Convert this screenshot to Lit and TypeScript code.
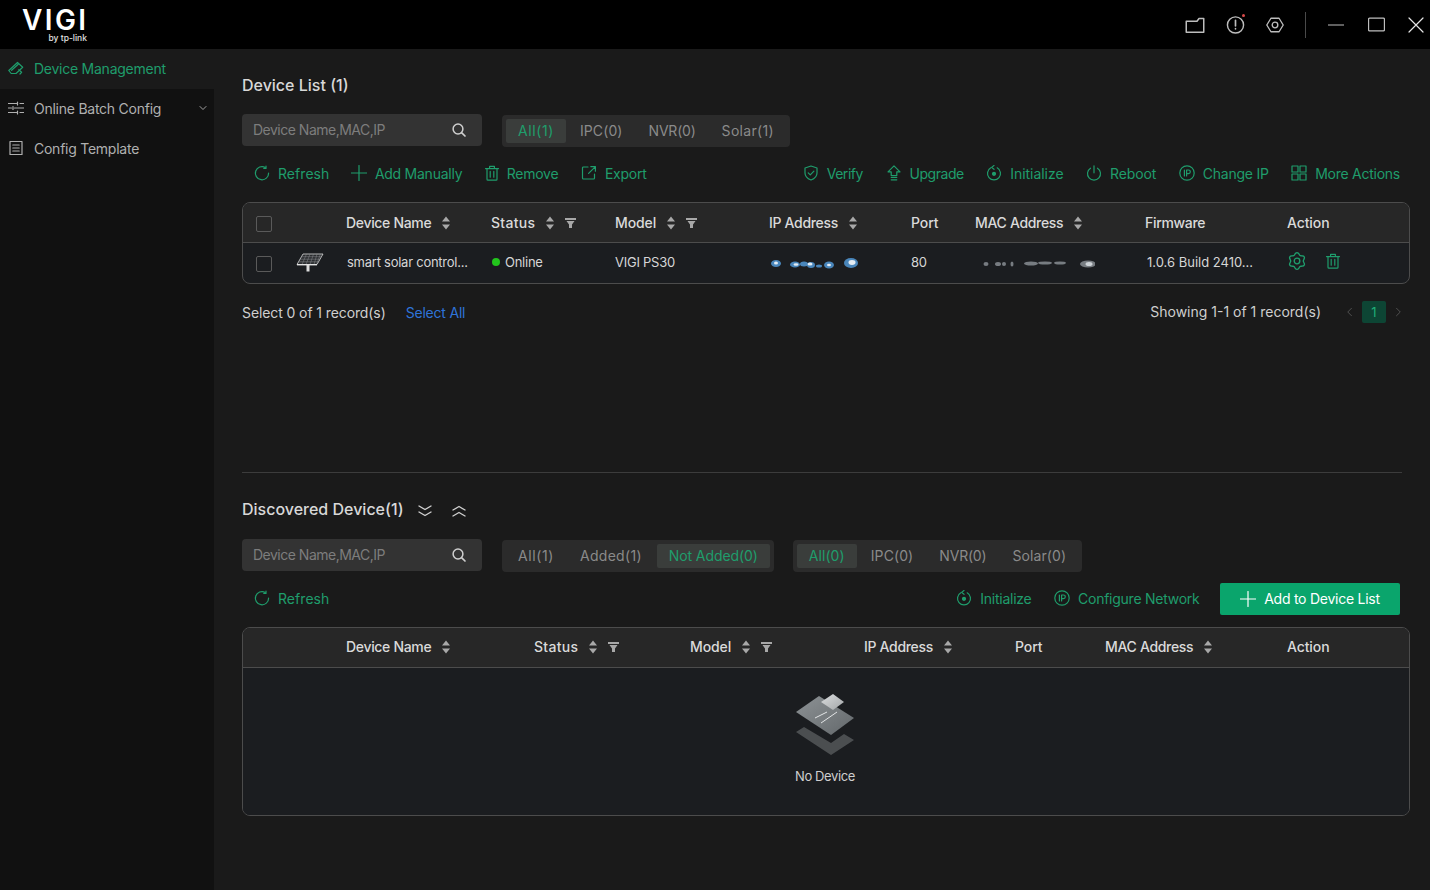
import { LitElement, html, css, svg, nothing } from "lit";
import { customElement } from "lit/decorators.js";

const ic = (inner: unknown, size = 16, cls = "") => html`<svg class="ic ${cls}" width=${size} height=${size} viewBox="0 0 16 16" fill="none" stroke="currentColor" stroke-width="1.2" stroke-linecap="round" stroke-linejoin="round">${inner}</svg>`;

const flower = (() => {
  const pts: string[] = [];
  for (let i = 0; i < 72; i++) {
    const t = (i / 72) * Math.PI * 2;
    const r = 6.5 + 0.9 * Math.cos(6 * t);
    pts.push(`${(8 + r * Math.sin(t)).toFixed(2)} ${(8 - r * Math.cos(t)).toFixed(2)}`);
  }
  return "M" + pts.join("L") + "z";
})();

const I = {
  refresh: svg`<path d="M11.2 2.400A6.600 6.600 0 1 0 14.600 8"/><path d="M11.600 .8v2.400H9.400" transform="translate(.4 .2)"/>`,
  plus: svg`<path d="M8 .5v15M.5 8h15"/>`,
  trash: svg`<path d="M1.500 3.600h13M5.600 3.400V1.400h4.800v2M3 3.800v10.400c0 .6.3.9.9.9h8.200c.6 0 .9-.3.9-.9V3.800M6.200 6.400v5.800M9.800 6.400v5.800"/>`,
  export: svg`<path d="M7 2H2.400C1.900 2 1.500 2.400 1.500 2.900v10.200c0 .5.4.9.9.9h10.200c.5 0 .9-.4.9-.9V9M9.800 1.600h4.600v4.600M14.200 1.800 7.600 8.400"/>`,
  verify: svg`<path d="M8 1 14 3v5c0 3.400-2.600 5.700-6 7-3.400-1.300-6-3.600-6-7V3z"/><path d="m5.200 7.800 2.100 2.100 3.600-3.700"/>`,
  upgrade: svg`<path d="M8 .8 14 6.800H10.800V10.600H5.200V6.800H2zM5.200 12.500h5.600M5.200 14.800h5.600"/>`,
  init: svg`<path d="M4.800 2.800a6.500 6.500 0 1 0 6.400 0"/><path d="M8.400 .5 6 2.400l2.400 1.900" transform="translate(-.4 0)"/><circle cx="8" cy="8.800" r="1.500" fill="currentColor"/>`,
  power: svg`<path d="M8 .8v7M4.500 3.200a6.500 6.500 0 1 0 7 0"/>`,
  ip: svg`<circle cx="8" cy="8" r="7.200"/><path d="M5.400 5v6M7.600 11V5h1.900a1.700 1.700 0 0 1 0 3.600H7.600"/>`,
  grid: svg`<path d="M1 1h6v6H1zM9 1h6v6H9zM1 9h6v6H1zM9 9h6v6H9z"/>`,
  search: svg`<circle cx="7" cy="7" r="4.900" stroke-width="1.500"/><path d="m10.800 10.800 3.200 3.200" stroke-width="1.700"/>`,
  gear: svg`<path d=${flower}/><circle cx="8" cy="8" r="2.500"/>`,
  sliders: svg`<path d="M.5 3.500h8.500M12 3.500h3.500M.5 8h3M6.500 8h9M.5 12.500h8.500M12 12.500h3.500M9.500 2v3M5 6.500v3M9.500 11v3"/>`,
  doc: svg`<path d="M2 1.500h12v13H2zM4.800 5h6.400M4.800 8h6.400M4.800 11h6.400"/>`,
  cam: svg`<path d="M.8 10.500 9.500 2.500l5.200 4.700-6.700 6.300H3.200zM3.600 10.300l6.400-5.800M10.800 9.600l2.800 2.700-1.600 1.700"/>`,
  chev: svg`<path d="m4 6 4 4 4-4"/>`,
  double: svg`<path d="m2 3 6 3.500L14 3M2 9l6 3.500L14 9" stroke-width="1.400"/>`,
  doubleUp: svg`<path d="m2 7 6-3.500L14 7M2 13l6-3.500L14 13" stroke-width="1.400"/>`,
  folder: svg`<path d="M1 5h8.600l1.600-2.200H15v11H1z"/>`,
  info: svg`<circle cx="8" cy="8.400" r="6.800"/><path d="M8 4.500v4.700M8 11.500v.3" stroke-width="1.400"/>`,
  hex: svg`<path d="M4.400 2h7.200L15.300 8l-3.700 6H4.400L.7 8z"/><circle cx="8" cy="8" r="2.500"/>`,
  min: svg`<path d="M.5 8h15"/>`,
  max: svg`<rect x=".5" y="2" width="15" height="12" rx="1"/>`,
  close: svg`<path d="m1 1 14 14M15 1 1 15"/>`,
  left: svg`<path d="m10 3-5 5 5 5"/>`,
  right: svg`<path d="m6 3 5 5-5 5"/>`,
};

const sort = html`<svg class="sort" width="10" height="14" viewBox="0 0 10 14"><path d="M5 0.500 9 5.500H1zM5 13.500 1 8.500h8z" fill="currentColor"/></svg>`;
const filter = html`<svg class="filter" width="11" height="10" viewBox="0 0 11 10"><path d="M0 0h11v2H0zM1.500 3h8L7 6.500v3.500H4V6.500z" fill="currentColor"/></svg>`;

const solar = html`<svg class="panel" width="28" height="22" viewBox="0 0 28 22" fill="none"><path d="M7 2h20l-6 10.500H1z" fill="#2b2d30" stroke="#dcdcdc" stroke-width=".8"/><path d="M10.500 2 6 12.500M14 2 10 12.500M17.500 2 14 12.500M21 2 18 12.500M24.500 2 20.500 12.500M5 4.700h20.500M3.500 7.200h20.500M2.200 9.800h20.300" stroke="#8b8d90" stroke-width=".5"/><path d="M1 12.700h20" stroke="#e2e2e2" stroke-width="1.400"/><path d="M12 13v6.500" stroke="#dcdcdc" stroke-width="3"/></svg>`;

const blurIp = html`<svg class="blur" width="92" height="14" viewBox="0 0 92 14"><defs><filter id="fz" x="-10%" y="-30%" width="120%" height="140%"><feGaussianBlur stdDeviation=".6"/></filter></defs><g filter="url(#fz)">
  <g fill="#4a86bb"><ellipse cx="7" cy="6.500" rx="5" ry="3.500"/><ellipse cx="26" cy="7.500" rx="5" ry="3"/><ellipse cx="35" cy="7" rx="4" ry="2.500"/><ellipse cx="42" cy="8" rx="4" ry="3"/><ellipse cx="50" cy="9" rx="3" ry="1.500"/><ellipse cx="60" cy="8" rx="5" ry="3.500"/><ellipse cx="82" cy="6" rx="7" ry="5"/></g>
  <g fill="#e4ecf3"><ellipse cx="7" cy="6" rx="2" ry="1.500"/><ellipse cx="27" cy="7.500" rx="2.500" ry="1.300"/><ellipse cx="41" cy="7" rx="2.500" ry="1.500"/><ellipse cx="60" cy="8" rx="2" ry="1.300"/><ellipse cx="83" cy="5.500" rx="3.500" ry="2.400"/></g></g></svg>`;
const blurMac = html`<svg class="blur" width="120" height="12" viewBox="0 0 120 12"><defs><filter id="fy" x="-5%" y="-40%" width="110%" height="180%"><feGaussianBlur stdDeviation=".6"/></filter></defs><g filter="url(#fy)"><g fill="#777c81"><ellipse cx="11" cy="6" rx="2.500" ry="2"/><ellipse cx="23" cy="6" rx="3" ry="2"/><ellipse cx="29" cy="6" rx="2" ry="2"/><ellipse cx="37" cy="6" rx="1.500" ry="2.500"/><ellipse cx="56" cy="5.500" rx="7" ry="2"/><ellipse cx="70" cy="5" rx="7" ry="1.600"/><ellipse cx="85" cy="5" rx="6" ry="1.600"/><ellipse cx="113" cy="6" rx="8" ry="3.500"/></g><ellipse cx="114" cy="6" rx="3.500" ry="2" fill="#cdd2d6"/></g></svg>`;

const emptyIcon = html`<svg width="60" height="62" viewBox="35 13 60 62">
  <defs><linearGradient id="pl" x1="0" y1="0" x2="1" y2="1"><stop offset="0" stop-color="#8d9295"/><stop offset="1" stop-color="#63686b"/></linearGradient>
  <linearGradient id="tl" x1="0" y1="0" x2="1" y2="1"><stop offset="0" stop-color="#dcdedf"/><stop offset="1" stop-color="#a2a5a7"/></linearGradient></defs>
  <path d="M35 52 43 47 70 63 83 54 93 60 70 75z" fill="#4b4e50"/>
  <path d="M35 32 58 16 93 38 70 55z" fill="url(#pl)"/>
  <path d="M60 22 72 14 83 22 72 30z" fill="url(#tl)"/>
  <path d="M54 38 66 32M60 43 76 32" stroke="#e3e5e6" stroke-width="1" fill="none"/>
</svg>`;

type Tab = { label: string; on?: boolean; cls?: string };

@customElement("app-root")
export class AppRoot extends LitElement {
  static styles = css`
    :host { display: block; width: 1430px; height: 890px; overflow: hidden; background: #1a1a1a; color: #d4d4d4; font-family: Inter, "Liberation Sans", sans-serif; font-size: 14px; letter-spacing: -0.25px; }
    * { box-sizing: border-box; }
    .ic { flex: none; display: block; }
    .top { height: 49px; background: #000; display: flex; align-items: center; }
    .logo { margin-left: 22px; margin-top: 1px; width: 66px; display: flex; flex-direction: column; align-items: flex-end; color: #fff; }
    .logo b { font-size: 28px; line-height: 25px; font-weight: 600; letter-spacing: 2.4px; width: 66px; }
    .logo span { font-size: 8.500px; line-height: 10px; font-weight: 500; letter-spacing: 0; margin-right: 1px; color: #e0e0e0; }
    .winbar { margin-left: auto; display: flex; align-items: center; color: #bdbdbd; }
    .wb { width: 40px; height: 40px; display: flex; align-items: center; justify-content: center; position: relative; }
    .wb.x { width: 28px; margin-left: 6px; color: #e6e6e6; }
    .dot { position: absolute; width: 3px; height: 3px; border-radius: 50%; background: #d94a4a; top: 9px; right: 10px; }
    .sep { width: 1px; height: 26px; background: #4a4a4a; margin: 0 10px; }
    .body { display: flex; height: 841px; }
    .side { width: 214px; background: #111; flex: none; }
    .nav { height: 40px; display: flex; align-items: center; gap: 10px; padding: 0 0 2px 8px; color: #b0b0b0; position: relative; }
    .nav.on { background: #1a1a1a; color: #1f9d6c; }
    .nav .chev { position: absolute; right: 5px; }
    .main { flex: 1; padding: 24px 20px 0 28px; min-width: 0; }
    .title { height: 24px; line-height: 24px; font-size: 16px; font-weight: 500; color: #d8d8d8; display: flex; align-items: center; letter-spacing: 0; }
    .title .tw { color: #d0d0d0; margin-left: 13px; padding-top: 4px; }
    .title .tw + .tw { margin-left: 18px; }
    .filters { display: flex; align-items: flex-start; margin-top: 17px; }
    .filters.second { margin-top: 18px; }
    .search { width: 240px; height: 32px; border-radius: 4px; background: #333; display: flex; align-items: center; justify-content: space-between; padding: 0 15px 0 11px; color: #7d7d7d; letter-spacing: -0.5px; }
    .search span { padding-bottom: 2px; }
    .search .ic { color: #cfcfcf; }
    .tabs { height: 32px; margin-top: 1px; background: #2b2b2b; border-radius: 4px; padding: 4px; display: flex; margin-left: 20px; gap: 2px; color: #8a8a8a; }
    .tabs + .tabs { margin-left: 19px; }
    .tab { padding: 0 12px; height: 24px; line-height: 24px; border-radius: 2px; white-space: nowrap; letter-spacing: 0.1px; }
    .tab.a { letter-spacing: 0.6px; }
    .tab.s { letter-spacing: 0.3px; }
    .tab.n { letter-spacing: -0.2px; }
    .tab.tight { letter-spacing: -0.1px; margin-left: 1px; }
    .tab.on { background: #3a3d3b; color: #1f9d6c; }
    .tools { height: 32px; margin-top: 11px; padding: 0 10px 0 12px; display: flex; align-items: center; gap: 22.500px; color: #1f9d6c; }
    .tool { display: flex; align-items: center; gap: 8px; white-space: nowrap; padding-bottom: 2px; }
    .tool.narrow { letter-spacing: -0.45px; }
    .tool.loose { letter-spacing: 0.05px; }
    .tool.even { letter-spacing: -0.05px; }
    .tool.pull { margin-left: -1px; }
    .tool.boot { letter-spacing: -0.1px; }
    .tool.bin { gap: 7px; margin-left: -1px; }
    .push { margin-left: auto; }
    .btn { height: 32px; width: 180px; border-radius: 2px; background: #0aa56c; color: #fff; display: flex; align-items: center; justify-content: center; gap: 8px; margin-left: -2px; padding-bottom: 1px; }
    .table { margin-top: 12px; border: 1px solid #4c4c4c; border-radius: 8px; overflow: hidden; background: #1b1d20; }
    .row { display: grid; align-items: center; height: 40px; }
    .upper { grid-template-columns: 103px 145px 124px 154px 142px 64px 170px 142px 1fr; }
    .lower { grid-template-columns: 103px 188px 156px 174px 151px 90px 182px 1fr; }
    .head { background: #272727; border-bottom: 1px solid #4c4c4c; color: #dadada; font-weight: 500; letter-spacing: -0.32px; }
    .head.lower { padding-bottom: 2px; }
    .head .wide { letter-spacing: 0.3px; }
    .head .even { letter-spacing: -0.1px; }
    .row.data { color: #d6d6d6; font-size: 13px; padding-bottom: 2px; }
    .cell { display: flex; align-items: center; white-space: nowrap; min-width: 0; }
    .leading { padding-left: 13px; }
    .sort { color: #a8a8a8; margin-left: 10px; flex: none; }
    .filter { color: #a8a8a8; margin-left: 10px; flex: none; }
    .box { width: 16px; height: 16px; border: 1px solid #5a5a5a; border-radius: 2px; flex: none; margin-top: 2px; }
    .data .box { margin-top: 4px; }
    .panel { margin-left: 24px; margin-top: 2px; }
    .blur { margin-top: 3px; }
    .online { width: 8px; height: 8px; border-radius: 50%; background: #22c51c; margin-right: 5px; margin-left: 1px; flex: none; }
    .nudge { padding-left: 1px; }
    .fw { padding-left: 2px; letter-spacing: 0; }
    .acts { display: flex; align-items: center; gap: 19px; color: #1f9d6c; margin-bottom: 2px; }
    .foot { height: 24px; margin-top: 17px; display: flex; align-items: center; color: #cfcfcf; padding: 0 6px 2px 0; letter-spacing: -0.1px; }
    .foot a { color: #2f74d9; margin-left: 20px; letter-spacing: -0.2px; }
    .pager { margin-left: auto; display: flex; align-items: center; letter-spacing: 0; }
    .pager > span:first-child { padding-bottom: 2px; }
    .page { width: 24px; height: 22px; background: #0d4534; color: #1fae78; border-radius: 2px; text-align: center; line-height: 22px; margin: 0 6px; font-size: 13px; }
    .pg { color: #555; margin-left: 23px; }
    .pg.r { margin-left: 0; }
    .divide { height: 1px; background: #3c3c3c; margin: 147px 8px 24px 0; }
    .empty { height: 147px; display: flex; flex-direction: column; align-items: center; padding-top: 25px; background: #1b1d20; }
    .empty span { font-size: 13px; margin-top: 13px; margin-right: 2px; color: #cfcfcf; letter-spacing: -0.4px; }
  `;

  private tool(icon: unknown, label: string, cls = "") {
    return html`<div class="tool ${cls}">${ic(icon)}<span>${label}</span></div>`;
  }

  private tabs(list: Tab[]) {
    return html`<div class="tabs">${list.map((t) => html`<div class="tab ${t.on ? "on" : ""} ${t.cls ?? ""}">${t.label}</div>`)}</div>`;
  }

  private search() {
    return html`<div class="search"><span>Device Name,MAC,IP</span>${ic(I.search)}</div>`;
  }

  private headCell(label: string, s = false, f = false, cls = "") {
    return html`<div class="cell"><span class=${cls}>${label}</span>${s ? sort : nothing}${f ? filter : nothing}</div>`;
  }

  render() {
    return html`
      <div class="top">
        <div class="logo"><b>VIGI</b><span>by tp-link</span></div>
        <div class="winbar">
          <div class="wb">${ic(I.folder, 20)}</div>
          <div class="wb">${ic(I.info, 19)}<i class="dot"></i></div>
          <div class="wb">${ic(I.hex, 18)}</div>
          <div class="sep"></div>
          <div class="wb">${ic(I.min)}</div>
          <div class="wb">${ic(I.max, 17)}</div>
          <div class="wb x">${ic(I.close)}</div>
        </div>
      </div>
      <div class="body">
        <aside class="side">
          <div class="nav on">${ic(I.cam)}<span>Device Management</span></div>
          <div class="nav">${ic(I.sliders)}<span>Online Batch Config</span>${ic(I.chev, 12, "chev")}</div>
          <div class="nav">${ic(I.doc)}<span>Config Template</span></div>
        </aside>
        <main class="main">
          <div class="title">Device List (1)</div>
          <div class="filters">
            ${this.search()}
            ${this.tabs([{ label: "All(1)", on: true, cls: "a" }, { label: "IPC(0)" }, { label: "NVR(0)", cls: "n" }, { label: "Solar(1)", cls: "s" }])}
          </div>
          <div class="tools">
            ${this.tool(I.refresh, "Refresh", "loose")}
            ${this.tool(I.plus, "Add Manually", "pull")}
            ${this.tool(I.trash, "Remove", "bin")}
            ${this.tool(I.export, "Export")}
            ${this.tool(I.verify, "Verify", "push narrow")}
            ${this.tool(I.upgrade, "Upgrade", "narrow")}
            ${this.tool(I.init, "Initialize", "even")}
            ${this.tool(I.power, "Reboot", "boot")}
            ${this.tool(I.ip, "Change IP")}
            ${this.tool(I.grid, "More Actions")}
          </div>
          <div class="table">
            <div class="row upper head">
              <div class="cell leading"><div class="box"></div></div>
              ${this.headCell("Device Name", true)}
              ${this.headCell("Status", true, true, "wide")}
              ${this.headCell("Model", true, true, "even")}
              ${this.headCell("IP Address", true)}
              ${this.headCell("Port", false, false, "even")}
              ${this.headCell("MAC Address", true)}
              ${this.headCell("Firmware")}
              ${this.headCell("Action", false, false, "even")}
            </div>
            <div class="row upper data">
              <div class="cell leading"><div class="box"></div>${solar}</div>
              <div class="cell nudge">smart solar control...</div>
              <div class="cell"><i class="online"></i>Online</div>
              <div class="cell">VIGI PS30</div>
              <div class="cell">${blurIp}</div>
              <div class="cell">80</div>
              <div class="cell">${blurMac}</div>
              <div class="cell fw">1.0.6 Build 2410...</div>
              <div class="cell nudge"><div class="acts">${ic(I.gear, 18)}${ic(I.trash, 16)}</div></div>
            </div>
          </div>
          <div class="foot">
            <span>Select 0 of 1 record(s)</span><a>Select All</a>
            <div class="pager">
              <span>Showing 1-1 of 1 record(s)</span>
              <span class="pg">${ic(I.left, 12)}</span>
              <div class="page">1</div>
              <span class="pg r">${ic(I.right, 12)}</span>
            </div>
          </div>
          <div class="divide"></div>
          <div class="title">Discovered Device(1)<span class="tw">${ic(I.double)}</span><span class="tw">${ic(I.doubleUp)}</span></div>
          <div class="filters second">
            ${this.search()}
            ${this.tabs([{ label: "All(1)", cls: "a" }, { label: "Added(1)", cls: "s" }, { label: "Not Added(0)", on: true, cls: "tight" }])}
            ${this.tabs([{ label: "All(0)", on: true }, { label: "IPC(0)" }, { label: "NVR(0)", cls: "n" }, { label: "Solar(0)" }])}
          </div>
          <div class="tools">
            ${this.tool(I.refresh, "Refresh", "loose")}
            ${this.tool(I.init, "Initialize", "push")}
            ${this.tool(I.ip, "Configure Network")}
            <div class="btn">${ic(I.plus)}<span>Add to Device List</span></div>
          </div>
          <div class="table">
            <div class="row lower head">
              <div class="cell"></div>
              ${this.headCell("Device Name", true)}
              ${this.headCell("Status", true, true, "wide")}
              ${this.headCell("Model", true, true, "even")}
              ${this.headCell("IP Address", true)}
              ${this.headCell("Port", false, false, "even")}
              ${this.headCell("MAC Address", true)}
              ${this.headCell("Action", false, false, "even")}
            </div>
            <div class="empty">${emptyIcon}<span>No Device</span></div>
          </div>
        </main>
      </div>
    `;
  }
}
